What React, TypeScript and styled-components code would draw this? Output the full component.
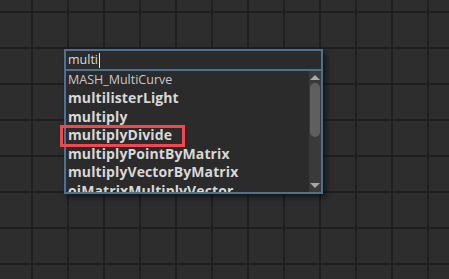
import styled, { createGlobalStyle } from "styled-components";

const items = [
    { name: "MASH_MultiCurve", bold: false },
    { name: "multilisterLight", bold: true },
    { name: "multiply", bold: true },
    { name: "multiplyDivide", bold: true },
    { name: "multiplyPointByMatrix", bold: true },
    { name: "multiplyVectorByMatrix", bold: true },
    { name: "oiMatrixMultiplyVector", bold: true },
];

const App = () => {
    return (
        <>
            <GlobalStyle />
            <Canvas>
                <Popup>
                    <SearchField>
                        <SearchText>multi</SearchText>
                        <Caret />
                    </SearchField>
                    <ListBox>
                        <Items>
                            {items.map((item) => (
                                <Item key={item.name} bold={item.bold}>
                                    {item.name}
                                </Item>
                            ))}
                        </Items>
                        <ScrollBar>
                            <Arrow up />
                            <Track>
                                <Thumb />
                            </Track>
                            <Arrow />
                        </ScrollBar>
                    </ListBox>
                </Popup>
                <Annotation />
            </Canvas>
        </>
    );
};

export default App;

const GlobalStyle = createGlobalStyle`
    html, body {
        margin: 0;
        padding: 0;
        background: #2d2d2d;
    }
`;

const Canvas = styled.div`
    position: relative;
    width: 449px;
    height: 279px;
    overflow: hidden;
    background-color: #2d2d2d;
    background-image:
        linear-gradient(to right, #1f1f1f 0, #1f1f1f 2px, transparent 2px),
        linear-gradient(to bottom, #1f1f1f 0, #1f1f1f 2px, transparent 2px);
    background-size: 36px 36px;
    background-position: 31px 11px;
    font-family: "Open Sans", "Noto Sans", sans-serif;
`;

const Popup = styled.div`
    position: absolute;
    left: 64px;
    top: 49px;
    width: 259px;
    display: flex;
    flex-direction: column;
    box-shadow: 3px 3px 6px rgba(0, 0, 0, 0.55);
`;

const SearchField = styled.div`
    height: 18px;
    border: 2px solid #4e7191;
    background: #2b2b2b;
    display: flex;
    align-items: center;
    padding-left: 2px;
`;

const SearchText = styled.span`
    color: #dcdcdc;
    font-size: 12.5px;
    line-height: 18px;
`;

const Caret = styled.span`
    width: 1px;
    height: 15px;
    margin-left: 1px;
    background: #e6e6e6;
`;

const ListBox = styled.div`
    height: 121px;
    border: 2px solid #4e7191;
    border-top: none;
    background: #2b2b2b;
    display: flex;
    overflow: hidden;
`;

const Items = styled.div`
    flex: 1;
    display: flex;
    flex-direction: column;
    overflow: hidden;
`;

const Item = styled.div<{ bold: boolean }>`
    padding-left: 2px;
    color: ${(p) => (p.bold ? "#d8d8d8" : "#c8c8c8")};
    font-size: ${(p) => (p.bold ? "14px" : "12.5px")};
    font-weight: ${(p) => (p.bold ? 700 : 400)};
    letter-spacing: ${(p) => (p.bold ? "0.1px" : "0")};
    height: ${(p) => (p.bold ? "18.5px" : "18px")};
    line-height: ${(p) => (p.bold ? "18.5px" : "18px")};
    white-space: nowrap;
    flex-shrink: 0;
`;

const ScrollBar = styled.div`
    width: 12px;
    background: #3a3a3a;
    display: flex;
    flex-direction: column;
    align-items: center;
`;

const Arrow = styled.div<{ up?: boolean }>`
    width: 0;
    height: 0;
    margin: ${(p) => (p.up ? "4px 0 3px" : "3px 0 4px")};
    border-left: 5px solid transparent;
    border-right: 5px solid transparent;
    ${(p) =>
        p.up
            ? "border-bottom: 5px solid #a8a8a8;"
            : "border-top: 5px solid #a8a8a8;"}
`;

const Track = styled.div`
    flex: 1;
    width: 100%;
    display: flex;
    justify-content: center;
`;

const Thumb = styled.div`
    width: 10px;
    height: 54px;
    border-radius: 5px;
    background: #5f5f5f;
`;

const Annotation = styled.div`
    position: absolute;
    left: 60px;
    top: 125px;
    width: 119px;
    height: 16px;
    border: 3px solid #f0484e;
`;
